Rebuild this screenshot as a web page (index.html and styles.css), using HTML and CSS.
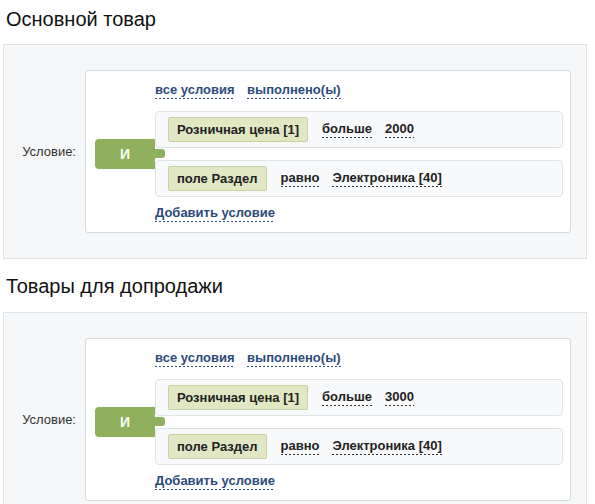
FILE: index.html
```html
<!DOCTYPE html>
<html lang="ru">
<head>
    <meta charset="UTF-8">
    <title>Правила работы с корзиной</title>
    <link rel="stylesheet" href="styles.css">
</head>
<body>

<div class="page">
    <div class="section">
        <h2>Основной товар</h2>
        <div class="panel">
            <div class="label">Условие:</div>
            <div class="cond-box">
                <div class="cond-head">
                    <span class="link">все условия</span>
                    <span class="link">выполнено(ы)</span>
                </div>
                <div class="logic">И</div>
                <div class="rows">
                    <div class="row">
                        <span class="tag">Розничная цена [1]</span>
                        <span class="value">больше</span>
                        <span class="value">2000</span>
                    </div>
                    <div class="row">
                        <span class="tag">поле Раздел</span>
                        <span class="value">равно</span>
                        <span class="value">Электроника [40]</span>
                    </div>
                </div>
                <div class="cond-add">
                    <span class="link">Добавить условие</span>
                </div>
            </div>
        </div>
    </div>

    <div class="section">
        <h2>Товары для допродажи</h2>
        <div class="panel">
            <div class="label">Условие:</div>
            <div class="cond-box">
                <div class="cond-head">
                    <span class="link">все условия</span>
                    <span class="link">выполнено(ы)</span>
                </div>
                <div class="logic">И</div>
                <div class="rows">
                    <div class="row">
                        <span class="tag">Розничная цена [1]</span>
                        <span class="value">больше</span>
                        <span class="value">3000</span>
                    </div>
                    <div class="row">
                        <span class="tag">поле Раздел</span>
                        <span class="value">равно</span>
                        <span class="value">Электроника [40]</span>
                    </div>
                </div>
                <div class="cond-add">
                    <span class="link">Добавить условие</span>
                </div>
            </div>
        </div>
    </div>
</div>

</body>
</html>
```

FILE: styles.css
```css
body {
    margin: 0;
    font-family: Arial, 'Liberation Sans', sans-serif;
    font-size: 13px;
    color: #222;
    background-color: #fff;
}

.page {
    padding: 0 8px 0 3px;
}

.section + .section {
    margin-top: 16px;
}

h2 {
    margin: 0 0 13px 3px;
    padding-top: 8px;
    font-size: 20px;
    font-weight: normal;
    line-height: 23px;
    color: #111;
}

.section + .section h2 {
    padding-top: 0;
    margin-bottom: 14px;
}

.panel {
    display: flex;
    align-items: center;
    padding: 25px 15px 25px 0;
    background-color: #f5f7f8;
    border: 1px solid #dfe3e6;
}

.label {
    width: 72px;
    padding-right: 9px;
    text-align: right;
    color: #333;
}

/* white condition box */
.cond-box {
    flex: 1;
    display: grid;
    grid-template-columns: 60px 1fr;
    align-items: center;
    padding: 11px 7px 12px 9px;
    background-color: #fff;
    border: 1px solid #d3d9dc;
    border-radius: 3px;
}

.cond-head,
.cond-add {
    grid-column: 2;
    line-height: 15px;
}

.cond-head {
    margin-bottom: 14px;
}

.cond-head .link + .link {
    margin-left: 9px;
}

.cond-add {
    margin-top: 8px;
}

.link,
.value {
    font-weight: bold;
    padding-bottom: 2px;
    background-repeat: repeat-x;
    background-position: left bottom;
    background-size: 4px 1px;
}

.link {
    color: #2c4b7a;
    background-image: linear-gradient(to right, #2c4b7a 2px, transparent 2px);
}

.value {
    color: #222;
    margin-left: 13px;
    background-image: linear-gradient(to right, #333 2px, transparent 2px);
}

/* green "И" connector */
.logic {
    grid-column: 1;
    position: relative;
    height: 30px;
    line-height: 30px;
    text-align: center;
    font-size: 14px;
    font-weight: bold;
    color: #fff;
    background-color: #8fb05c;
    border-radius: 4px 0 0 4px;
}

.logic::after {
    content: "";
    position: absolute;
    right: -10px;
    top: 10px;
    width: 10px;
    height: 9px;
    background-color: #8fb05c;
    border-radius: 0 3px 3px 0;
}

.rows {
    grid-column: 2;
    display: flex;
    flex-direction: column;
    gap: 12px;
}

.row {
    display: flex;
    align-items: center;
    height: 35px;
    padding-left: 12px;
    background-color: #f8f9fa;
    border: 1px solid #dfe3e6;
    border-radius: 4px;
}

.tag {
    padding: 4px 8px;
    line-height: 15px;
    font-weight: bold;
    color: #222;
    background-color: #e1e7c2;
    border: 1px solid #c8d1a0;
    border-radius: 2px;
    margin-right: 1px;
}
```
